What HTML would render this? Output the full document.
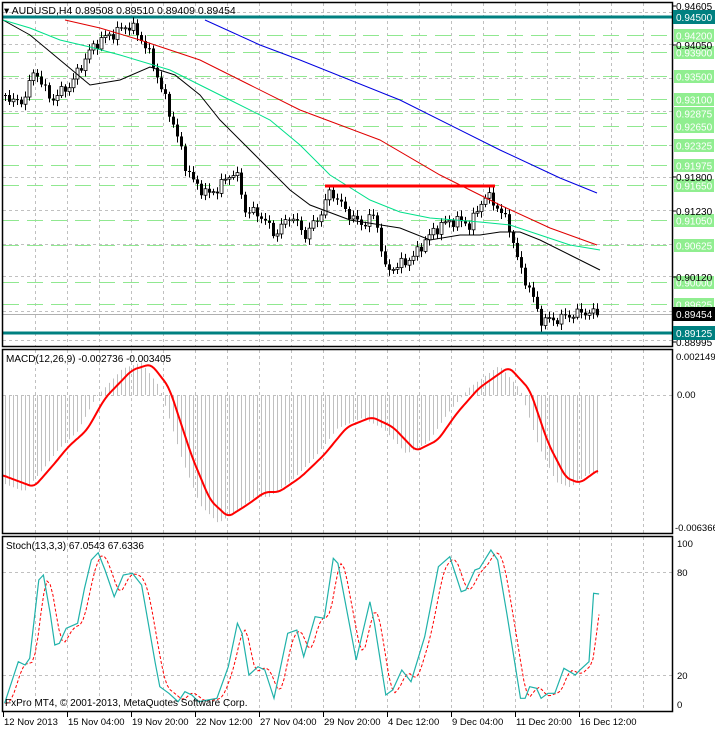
<!DOCTYPE html>
<html><head><meta charset="utf-8"><style>
html,body{margin:0;padding:0;background:#fff;width:715px;height:729px;overflow:hidden}
svg{display:block;font-family:"Liberation Sans",Arial,sans-serif;font-size:10px}
</style></head><body>
<svg id="s" width="715" height="729" xmlns="http://www.w3.org/2000/svg">
<rect width="715" height="729" fill="#fff"/>
<g id="grid"></g>
<g id="lv"></g>
<g id="hist"></g>
<g id="cand"></g>
<g id="ma"></g>
<g id="frames" fill="none" stroke="#000" stroke-width="1.5">
<rect x="2.5" y="2.5" width="670" height="344"/>
<rect x="2.5" y="349.5" width="670" height="184"/>
<rect x="2.5" y="536.5" width="670" height="175"/>
</g>
<g id="lab"></g>
<text x="4" y="14" font-size="10.5">▾ AUDUSD,H4  0.89508 0.89510 0.89409 0.89454</text>
<text x="6" y="362" font-size="10">MACD(12,26,9) -0.002736 -0.003405</text>
<text x="6" y="549" font-size="10">Stoch(13,3,3) 67.0543 67.6336</text>
<text x="5" y="706" font-size="10">FxPro MT4, © 2001-2013, MetaQuotes Software Corp.</text>
<text x="676" y="360" font-size="9.5">0.002149</text>
<text x="677" y="398" font-size="9.5">0.00</text>
<text x="675" y="531" font-size="9.5">-0.006366</text>
<text x="677" y="547" font-size="9.5">100</text>
<text x="677" y="576" font-size="9.5">80</text>
<text x="677" y="679" font-size="9.5">20</text>
<text x="677" y="708" font-size="9.5">0</text>
</svg>
<script>
var NS="http://www.w3.org/2000/svg";
function el(p,t,a,txt){var e=document.createElementNS(NS,t);for(var k in a)e.setAttribute(k,a[k]);if(txt!=null)e.textContent=txt;document.getElementById(p).appendChild(e);return e;}
function lin(P,x){if(x<=P[0][0])return P[0][1];for(var i=1;i<P.length;i++){if(x<=P[i][0]){var a=P[i-1],b=P[i];return a[1]+(b[1]-a[1])*(x-a[0])/(b[0]-a[0]);}}return P[P.length-1][1];}
function path(P){return "M"+P.map(function(p){return p[0].toFixed(1)+" "+p[1].toFixed(1)}).join(" L");}
function smooth(P,step,k){var out=[];for(var x=P[0][0];x<=P[P.length-1][0];x+=step){var s=0,n=0;for(var j=-k;j<=k;j++){s+=lin(P,x+j*2);n++;}out.push([x,s/n]);}return out;}
for(var x=35.5;x<672;x+=32){el("grid","line",{x1:x,y1:3,x2:x,y2:346,stroke:"#c0c0c0","stroke-dasharray":"3,3"});el("grid","line",{x1:x,y1:350,x2:x,y2:533,stroke:"#c0c0c0","stroke-dasharray":"3,3"});el("grid","line",{x1:x,y1:537,x2:x,y2:711,stroke:"#c0c0c0","stroke-dasharray":"3,3"});}
[12,44,78,111,145,177,210,244,276,311,340].forEach(function(y){el("grid","line",{x1:3,y1:y+.5,x2:672,y2:y+.5,stroke:"#c0c0c0","stroke-dasharray":"3,3"});});
[395.5].forEach(function(y){el("grid","line",{x1:3,y1:y,x2:672,y2:y,stroke:"#c0c0c0","stroke-dasharray":"3,3"});});
[572.5,675.5].forEach(function(y){el("grid","line",{x1:3,y1:y,x2:672,y2:y,stroke:"#c0c0c0","stroke-dasharray":"3,3"});});
function yp(p){return 17+(0.945-p)*5879;}
["0.94200","0.93900","0.93500","0.93100","0.92875","0.92650","0.92325","0.91975","0.91650","0.91050","0.90625","0.90000","0.89625"].forEach(function(s){var y=Math.round(yp(+s))+.5;
el("lv","line",{x1:3,y1:y,x2:672,y2:y,stroke:"#90e890","stroke-dasharray":"16,8"});
el("lab","rect",{x:674,y:y-6.5,width:40,height:13,fill:"#90ee90"});
el("lab","text",{x:676,y:y+4,fill:"#fff","font-size":"10"},s);});
[["0.94605",6],["0.94050",45],["0.91800",177],["0.91230",211],["0.90120",277],["0.88995",342]].forEach(function(a){el("lab","text",{x:676,y:a[1]+4,"font-size":"10"},a[0]);el("lab","line",{x1:672,y1:a[1],x2:676,y2:a[1],stroke:"#000"});});
[[17,"0.94500"],[333,"0.89125"]].forEach(function(a){el("lv","rect",{x:3,y:a[0]-1.5,width:670,height:3,fill:"#008080"});el("lab","rect",{x:673,y:a[0]-7,width:42,height:14,fill:"#008080"});el("lab","text",{x:676,y:a[0]+4,fill:"#fff","font-size":"10"},a[1]);});
el("lv","line",{x1:3,y1:314.5,x2:672,y2:314.5,stroke:"#b0b0b0"});
el("lab","rect",{x:673,y:307,width:42,height:14,fill:"#000"});el("lab","text",{x:676,y:318,fill:"#fff","font-size":"10"},"0.89454");
var CP=[[5,95],[20,105],[35,70],[50,100],[70,85],[90,50],[100,40],[120,30],[130,25],[145,45],[155,70],[165,100],[175,130],[185,165],[195,185],[210,195],[220,185],[235,170],[245,210],[260,215],[275,235],[290,215],[305,235],[320,215],[330,190],[345,210],[360,225],[375,215],[385,270],[400,265],[415,255],[425,240],[440,225],[455,220],[470,225],[485,195],[500,210],[510,230],[520,270],[530,290],[540,320],[555,320],[570,315],[585,312],[598,314]];
var prev=lin(CP,3);
for(var i=0;i<149;i++){var cx=5+i*4;var c=lin(CP,cx)+4*Math.sin(i*1.7)+2.5*Math.sin(i*3.1);var o=prev;prev=c;
var hi=Math.min(o,c)-2-4*Math.abs(Math.sin(i*2.3));var lo=Math.max(o,c)+2+4*Math.abs(Math.cos(i*1.9));
el("cand","line",{x1:cx+.5,y1:hi,x2:cx+.5,y2:lo,stroke:"#000"});
var t=Math.min(o,c),h=Math.max(1,Math.abs(o-c));
if(c<o)el("cand","rect",{x:cx-1,y:t,width:3,height:h,fill:"#fff",stroke:"#000","stroke-width":"0.8"});else el("cand","rect",{x:cx-1,y:t,width:3,height:h,fill:"#000"});}
function ma(P,col,w){el("ma","path",{d:path(P),fill:"none",stroke:col,"stroke-width":w});}
ma([[3,20],[30,35],[60,60],[90,85],[120,80],[150,67],[175,75],[200,95],[220,120],[245,145],[270,170],[290,190],[310,205],[350,220],[400,228],[430,240],[460,235],[480,235],[500,232],[520,232],[540,240],[570,255],[600,270]],"#000",1);
ma([[3,20],[30,28],[60,40],[90,47],[120,55],[170,70],[230,100],[270,120],[300,145],[330,175],[370,200],[400,212],[430,218],[480,222],[510,225],[540,235],[570,245],[600,250]],"#00e08a",1);
ma([[65,20],[100,28],[140,40],[200,60],[250,85],[300,110],[340,125],[380,140],[440,175],[500,205],[550,228],[597,245]],"#e00000",1);
ma([[205,20],[260,45],[300,60],[400,100],[500,150],[560,178],[597,193]],"#0000e0",1);
el("ma","line",{x1:325,y1:186,x2:495,y2:186,stroke:"#f00","stroke-width":3});
var MP=[[2,475],[34,487],[55,463],[68,447],[87,430],[105,398],[132,370],[151,364],[169,387],[192,457],[210,500],[228,517],[247,505],[265,492],[279,492],[301,477],[324,455],[347,427],[372,417],[393,427],[416,451],[438,440],[457,413],[479,388],[509,367],[530,390],[548,443],[566,478],[580,483],[598,470]];
for(var x=5;x<=600;x+=4){var v=lin(MP,x+10);var d=(v-395)*1.05;el("hist","line",{x1:x+.5,y1:395,x2:x+.5,y2:395+d,stroke:"#c0c0c0"});}
ma(smooth(MP,2,2),"#f00",2);
var SZ=[[10,520],[40,395],[55,405],[65,385],[85,150],[95,135],[110,250],[120,345],[130,340],[145,295],[170,280],[185,175],[200,90],[215,68],[230,120],[250,200],[270,135],[290,130],[310,165],[340,400],[350,470],[370,490],[390,515],[405,485],[420,495],[435,515],[455,510],[475,505],[500,410],[520,280],[530,310],[545,435],[565,410],[580,420],[600,505],[630,310],[650,300],[665,380],[690,260],[710,265],[730,85],[740,100],[780,390],[810,215],[820,280],[845,495],[860,480],[880,420],[900,455],[930,320],[960,110],[985,80],[1010,185],[1020,180],[1040,120],[1050,115],[1075,60],[1090,90],[1110,250],[1140,505],[1150,505],[1160,470],[1175,475],[1185,505],[1200,490],[1215,490],[1235,415],[1260,435],[1270,420],[1290,395],[1300,190],[1312,192]];
var SP=SZ.map(function(p){return [p[0]/2.19,530+p[1]/3];});
var SR=[];for(var x=5;x<=600;x+=3){var a=lin(SP,x-3),b=lin(SP,x-6),c=lin(SP,x-9);SR.push([x,(a+b+c)/3]);}
el("ma","path",{d:path(SR),fill:"none",stroke:"#f00","stroke-dasharray":"3,2"});
ma(SP,"#20b2aa",1.2);
[["12 Nov 2013",3],["15 Nov 04:00",67],["19 Nov 20:00",131],["22 Nov 12:00",195],["27 Nov 04:00",259],["29 Nov 20:00",323],["4 Dec 12:00",387],["9 Dec 04:00",451],["11 Dec 20:00",515],["16 Dec 12:00",579]].forEach(function(a){el("lab","line",{x1:a[1]+.5,y1:712,x2:a[1]+.5,y2:717,stroke:"#000"});el("lab","text",{x:a[1]+1,y:725,"font-size":"9.5"},a[0]);});
</script>
</body></html>
